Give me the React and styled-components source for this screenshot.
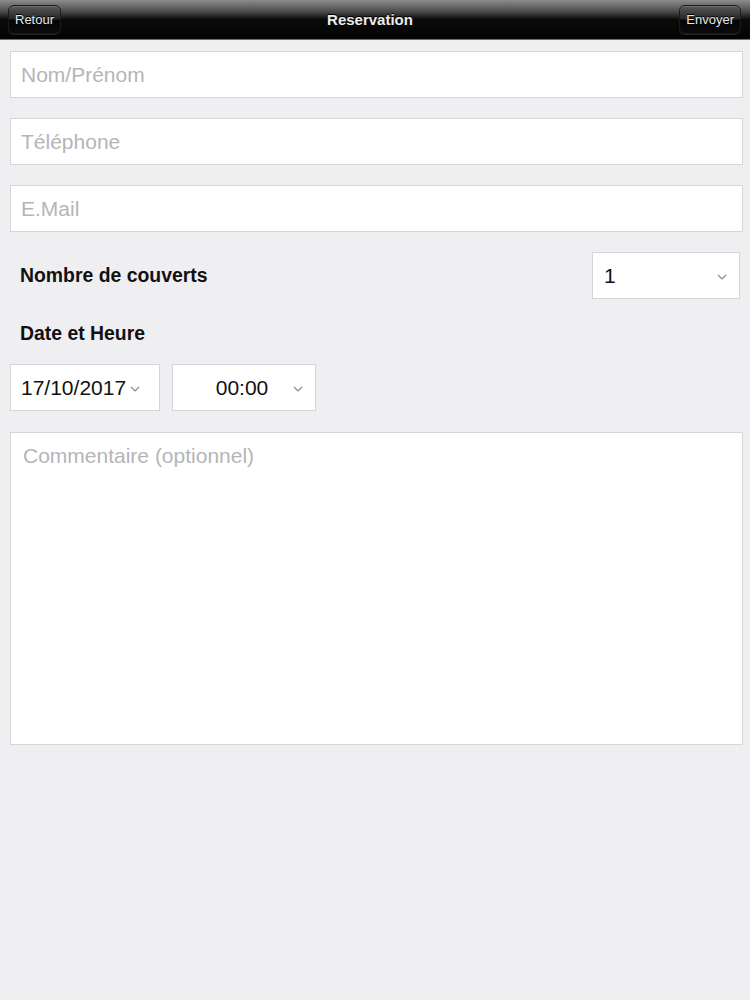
import React, { useState } from "react";
import styled, { createGlobalStyle } from "styled-components";

const GlobalStyle = createGlobalStyle`
  html, body {
    margin: 0;
    padding: 0;
    background: #efeef1;
    font-family: "Liberation Sans", Arial, sans-serif;
  }
`;

const Page = styled.div`
  width: 750px;
  min-height: 1000px;
  background: #efeef1;
`;

const NavBar = styled.header`
  height: 40px;
  display: flex;
  align-items: center;
  justify-content: space-between;
  padding: 0 9px 0 8px;
  box-sizing: border-box;
  background: linear-gradient(
    to bottom,
    #8c8c8c 0%,
    #4a4a4a 30%,
    #0a0a0a 50%,
    #030303 100%
  );
  border-bottom: 1px solid #6e6e6e;
  position: relative;
`;

const NavTitle = styled.h1`
  position: absolute;
  left: 0;
  right: 10px;
  top: 0;
  bottom: 0;
  margin: 0;
  display: flex;
  align-items: center;
  justify-content: center;
  font-size: 15px;
  font-weight: bold;
  color: #ececec;
  text-shadow: 0 -1px 0 #000;
  pointer-events: none;
`;

const BarButton = styled.button`
  position: relative;
  z-index: 1;
  height: 29px;
  padding: 0 6px;
  border-radius: 6px;
  border: 1px solid #1a1a1a;
  background: linear-gradient(to bottom, #5a5a5a 0%, #262626 48%, #050505 52%, #0b0b0b 100%);
  box-shadow: inset 0 1px 0 rgba(255, 255, 255, 0.15), 0 1px 0 rgba(255, 255, 255, 0.12);
  color: #e6e6e6;
  font-family: "Liberation Sans", Arial, sans-serif;
  font-size: 13px;
  text-shadow: 0 -1px 0 #000;
`;

const Form = styled.form`
  display: flex;
  flex-direction: column;
  padding: 11px 7px 0 10px;
`;

const TextField = styled.input`
  height: 47px;
  box-sizing: border-box;
  border: 1px solid #d6d5d8;
  background: #fff;
  padding: 0 10px;
  font-family: "Liberation Sans", Arial, sans-serif;
  font-size: 21px;
  color: #222;
  margin-bottom: 20px;
  outline: none;

  &::placeholder {
    color: #b5b5b7;
  }
`;

const FieldRow = styled.div`
  display: flex;
  align-items: center;
  justify-content: space-between;
  margin-bottom: ${(p) => p.$gap || 0}px;
`;

const Label = styled.label`
  font-size: 19.4px;
  font-weight: bold;
  color: #111;
  padding-left: 10px;
`;

const SelectBox = styled.div`
  width: ${(p) => p.$width}px;
  height: 47px;
  box-sizing: border-box;
  border: 1px solid #d6d5d8;
  background: #fff;
  display: flex;
  align-items: center;
  padding: ${(p) => p.$pad || "0 10px 0 10px"};
  font-size: 21px;
  color: #111;
  margin-right: ${(p) => p.$right || 0}px;
`;

const SelectValue = styled.span`
  flex: ${(p) => (p.$grow ? 1 : "none")};
  text-align: ${(p) => (p.$center ? "center" : "left")};
`;

const ChevronWrap = styled.span`
  display: inline-flex;
  margin-left: ${(p) => p.$ml || 0}px;
  margin-top: 2px;
`;

const DateRow = styled.div`
  display: flex;
  gap: 12px;
  margin-bottom: 21px;
`;

const Comment = styled.textarea`
  height: 313px;
  box-sizing: border-box;
  border: 1px solid #d6d5d8;
  background: #fff;
  padding: 11px 12px;
  resize: none;
  font-family: "Liberation Sans", Arial, sans-serif;
  font-size: 21px;
  color: #222;
  outline: none;

  &::placeholder {
    color: #b5b5b7;
  }
`;

const Spacer = styled.div`
  height: ${(p) => p.$h}px;
`;

const Chevron = ({ ml }) => (
  <ChevronWrap $ml={ml}>
    <svg width="10" height="6" viewBox="0 0 10 6">
      <path d="M1 1 L5 5 L9 1" fill="none" stroke="#8a8a8a" strokeWidth="1.2" />
    </svg>
  </ChevronWrap>
);

export default function App() {
  const [form, setForm] = useState({ name: "", phone: "", email: "", comment: "" });
  const update = (key) => (e) => setForm({ ...form, [key]: e.target.value });

  return (
    <Page>
      <GlobalStyle />
      <NavBar>
        <BarButton type="button">Retour</BarButton>
        <NavTitle>Reservation</NavTitle>
        <BarButton type="button">Envoyer</BarButton>
      </NavBar>

      <Form onSubmit={(e) => e.preventDefault()}>
        <TextField placeholder="Nom/Prénom" value={form.name} onChange={update("name")} />
        <TextField placeholder="Téléphone" value={form.phone} onChange={update("phone")} />
        <TextField placeholder="E.Mail" value={form.email} onChange={update("email")} />

        <FieldRow>
          <Label>Nombre de couverts</Label>
          <SelectBox $width={148} $right={3} $pad="0 12px 0 11px">
            <SelectValue $grow>1</SelectValue>
            <Chevron />
          </SelectBox>
        </FieldRow>

        <Spacer $h={23} />
        <FieldRow $gap={19}>
          <Label>Date et Heure</Label>
        </FieldRow>

        <DateRow>
          <SelectBox $width={150}>
            <SelectValue>17/10/2017</SelectValue>
            <Chevron ml={4} />
          </SelectBox>
          <SelectBox $width={144} $pad="0 12px 0 18px">
            <SelectValue $grow $center>00:00</SelectValue>
            <Chevron />
          </SelectBox>
        </DateRow>

        <Comment
          placeholder="Commentaire (optionnel)"
          value={form.comment}
          onChange={update("comment")}
        />
      </Form>
    </Page>
  );
}
